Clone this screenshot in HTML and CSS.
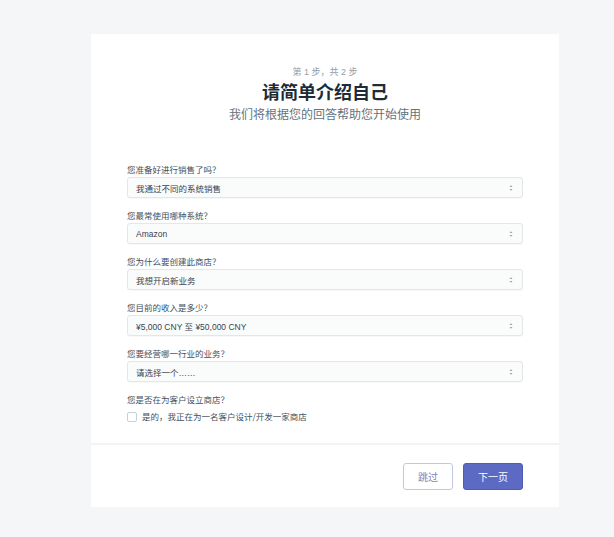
FILE: index.html
```html
<!DOCTYPE html>
<html lang="zh-CN">
<head>
<meta charset="utf-8">
<title>请简单介绍自己</title>
<link rel="stylesheet" href="styles.css">
</head>
<body>
<div class="page">
  <div class="card">
    <div class="header">
      <div class="step">第 1 步<span class="punct">，</span>共 2 步</div>
      <h1 class="title">请简单介绍自己</h1>
      <div class="subtitle">我们将根据您的回答帮助您开始使用</div>
    </div>
    <div class="form">
      <div class="group">
        <div class="label">您准备好进行销售了吗<span class="punct">？</span></div>
        <div class="select"><span>我通过不同的系统销售</span><svg class="arrow" viewBox="0 0 6 10" width="6" height="10"><path d="M1.5 4 L3 2.3 L4.5 4 Z M1.5 6 L3 7.7 L4.5 6 Z" fill="#9aa3ad"/></svg></div>
      </div>
      <div class="group">
        <div class="label">您最常使用哪种系统<span class="punct">？</span></div>
        <div class="select"><span>Amazon</span><svg class="arrow" viewBox="0 0 6 10" width="6" height="10"><path d="M1.5 4 L3 2.3 L4.5 4 Z M1.5 6 L3 7.7 L4.5 6 Z" fill="#9aa3ad"/></svg></div>
      </div>
      <div class="group">
        <div class="label">您为什么要创建此商店<span class="punct">？</span></div>
        <div class="select"><span>我想开启新业务</span><svg class="arrow" viewBox="0 0 6 10" width="6" height="10"><path d="M1.5 4 L3 2.3 L4.5 4 Z M1.5 6 L3 7.7 L4.5 6 Z" fill="#9aa3ad"/></svg></div>
      </div>
      <div class="group">
        <div class="label">您目前的收入是多少<span class="punct">？</span></div>
        <div class="select"><span>¥5,000 CNY 至 ¥50,000 CNY</span><svg class="arrow" viewBox="0 0 6 10" width="6" height="10"><path d="M1.5 4 L3 2.3 L4.5 4 Z M1.5 6 L3 7.7 L4.5 6 Z" fill="#9aa3ad"/></svg></div>
      </div>
      <div class="group">
        <div class="label">您要经营哪一行业的业务<span class="punct">？</span></div>
        <div class="select"><span>请选择一个……</span><svg class="arrow" viewBox="0 0 6 10" width="6" height="10"><path d="M1.5 4 L3 2.3 L4.5 4 Z M1.5 6 L3 7.7 L4.5 6 Z" fill="#9aa3ad"/></svg></div>
      </div>
      <div class="group last">
        <div class="label">您是否在为客户设立商店<span class="punct">？</span></div>
        <label class="check"><span class="box"></span><span>是的<span class="punct">，</span>我正在为一名客户设计/开发一家商店</span></label>
      </div>
    </div>
    <div class="footer">
      <button class="btn secondary">跳过</button>
      <button class="btn primary">下一页</button>
    </div>
  </div>
</div>
</body>
</html>
```

FILE: styles.css
```css
* { box-sizing: border-box; }
html, body { margin: 0; padding: 0; }
body {
  background: #f4f6f8;
  font-family: "Liberation Sans", "Noto Sans CJK SC", sans-serif;
  color: #212b36;
  width: 614px;
  height: 537px;
  overflow: hidden;
}
.page {
  padding: 34px 0 0 91px;
}
.card {
  width: 468px;
  background: #ffffff;
}
.header {
  padding-top: 32px;
  text-align: center;
}
.step {
  font-size: 9px;
  line-height: 12px;
  color: #919eab;
}
.punct {
  font-family: "Noto Sans CJK TC", sans-serif;
}
.title {
  margin: 1px 0 0;
  font-size: 18px;
  line-height: 24px;
  font-weight: 700;
  color: #212b36;
  font-family: "Noto Sans CJK SC", sans-serif;
}
.subtitle {
  margin-top: 3px;
  font-size: 12px;
  line-height: 16px;
  color: #637381;
  font-family: "Noto Sans CJK SC", sans-serif;
}
.form {
  padding: 41px 36px 0;
}
.group {
  margin-bottom: 11px;
}
.group.last {
  margin-bottom: 0;
  padding-bottom: 21px;
}
.label {
  font-family: "Noto Sans CJK SC", sans-serif;
  font-size: 8.5px;
  line-height: 12px;
  color: #454f5b;
  margin-bottom: 2px;
}
.select {
  height: 21px;
  border: 1px solid #e3e6ea;
  border-radius: 3px;
  background: #fafbfb;
  display: flex;
  align-items: center;
  justify-content: space-between;
  padding: 0 8px 0 8px;
  font-size: 8.5px;
  color: #3a434e;
  box-shadow: 0 1px 0 rgba(22, 29, 37, 0.03);
}
.arrow { display: block; }
.check {
  display: flex;
  align-items: center;
  gap: 5px;
  margin-top: 6px;
  font-family: "Noto Sans CJK SC", sans-serif;
  font-size: 8.5px;
  line-height: 11px;
  color: #454f5b;
}
.box {
  width: 10px;
  height: 10px;
  border: 1px solid #c9cfd6;
  border-radius: 2px;
  background: #fff;
}
.footer {
  border-top: 2px solid #f1f3f5;
  height: 64px;
  padding: 0 36px;
  display: flex;
  align-items: center;
  justify-content: flex-end;
  gap: 10px;
}
.btn {
  height: 27px;
  border-radius: 3px;
  font-family: "Noto Sans CJK SC", sans-serif;
  font-size: 10px;
  padding: 0;
  cursor: pointer;
}
.secondary {
  width: 50px;
  background: #ffffff;
  border: 1px solid #c3c7e6;
  color: #7c84b8;
}
.primary {
  width: 60px;
  background: #5c6ac4;
  border: 1px solid #4f5bb5;
  color: #ffffff;
}
```
